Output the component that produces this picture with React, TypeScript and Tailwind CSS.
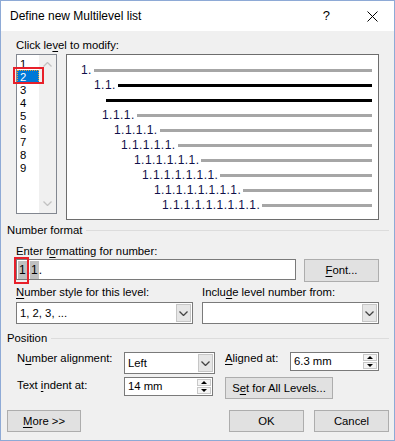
import React from "react";

const font = "font-['Liberation_Sans',Arial,sans-serif]";

function Chevron({ color = "#444" }: { color?: string }) {
  return (
    <svg width="9" height="5" viewBox="0 0 9 5">
      <polyline points="0.5,0.5 4.5,4.5 8.5,0.5" fill="none" stroke={color} strokeWidth="1.3" />
    </svg>
  );
}

function Select({ value, className = "" }: { value: string; className?: string }) {
  return (
    <div className={`flex h-[22px] border border-[#7a7a7a] bg-white ${className}`}>
      <div className="flex flex-1 items-center pl-[3px]">{value}</div>
      <div className="m-px flex w-[15px] items-center justify-center border border-[#c6c6c6] bg-[#e6e6e6]">
        <Chevron />
      </div>
    </div>
  );
}

function Spin({ value, className = "" }: { value: string; className?: string }) {
  return (
    <div className={`flex h-[19px] border border-[#7a7a7a] bg-white ${className}`}>
      <div className="flex flex-1 items-center pl-[3px]">{value}</div>
      <div className="flex w-[16px] flex-col gap-px p-px">
        <div className="flex flex-1 items-center justify-center border border-[#c8c8c8] bg-[#f4f4f4]">
          <div className="h-0 w-0 border-x-[3px] border-b-[3px] border-x-transparent border-b-black" />
        </div>
        <div className="flex flex-1 items-center justify-center border border-[#c8c8c8] bg-[#f4f4f4]">
          <div className="h-0 w-0 border-x-[3px] border-t-[3px] border-x-transparent border-t-black" />
        </div>
      </div>
    </div>
  );
}

function Button({ children, className = "" }: { children: React.ReactNode; className?: string }) {
  return (
    <div className={`flex h-[22px] items-center justify-center border border-[#adadad] bg-[#e1e1e1] ${className}`}>
      {children}
    </div>
  );
}

function Group({ title }: { title: string }) {
  return (
    <div className="flex h-[15px] items-center">
      <span className="leading-[15px]">{title}</span>
      <div className="ml-[4px] h-px flex-1 bg-[#dcdcdc]" />
    </div>
  );
}

const rows = [
  { indent: 14, text: "1.", black: false },
  { indent: 27, text: "1.1.", black: true },
  { indent: 39, text: "", black: true },
  { indent: 35, text: "1.1.1.", black: false },
  { indent: 47, text: "1.1.1.1.", black: false },
  { indent: 54, text: "1.1.1.1.1.", black: false },
  { indent: 67, text: "1.1.1.1.1.1.", black: false },
  { indent: 75, text: "1.1.1.1.1.1.1.", black: false },
  { indent: 87, text: "1.1.1.1.1.1.1.1.", black: false },
  { indent: 95, text: "1.1.1.1.1.1.1.1.1.", black: false },
];

function Preview() {
  return (
    <div className="ml-[9px] h-[166px] w-[313px] border border-[#6d6d6d] bg-white pr-[6px] pt-[8px]">
      {rows.map((r, i) => (
        <div key={i} className="flex h-[15px] items-center" style={{ paddingLeft: r.indent }}>
          {r.text && (
            <span className="mr-[2px] text-[12px] leading-[15px] tracking-[0.45px] text-[#10104a]">{r.text}</span>
          )}
          <div className={`h-[3px] flex-1 ${r.black ? "bg-black" : "bg-[#a6a6a6]"}`} />
        </div>
      ))}
    </div>
  );
}

function LevelList() {
  const levels = ["1", "2", "3", "4", "5", "6", "7", "8", "9"];
  return (
    <div className="relative flex h-[160px] w-[41px] border border-[#828790] bg-white">
      <div className="w-[22px] pt-[2px]">
        {levels.map((l) => (
          <div
            key={l}
            className={`h-[13px] pl-[2px] leading-[13px] ${
              l === "2" ? "border border-dotted border-[#f0a030] bg-[#0078d7] text-white" : "border border-transparent"
            }`}
          >
            {l}
          </div>
        ))}
      </div>
      <div className="flex flex-1 flex-col items-center justify-between bg-[#f0f0f0] py-[7px]">
        <div className="rotate-180">
          <Chevron color="#c2c2c2" />
        </div>
        <Chevron color="#c2c2c2" />
      </div>
      <div className="absolute left-[-4px] top-[12px] h-[17px] w-[31px] border-2 border-[#e8202a]" />
    </div>
  );
}

export default function App() {
  return (
    <div className={`flex h-[441px] w-[395px] flex-col overflow-hidden border border-[#8eaad6] bg-[#f0f0f0] text-[11.3px] text-black ${font}`}>
      <div className="flex h-[30px] items-center bg-white pl-[9px] pr-[16px] text-[12px]">
        <span>Define new Multilevel list</span>
        <span className="ml-auto text-[13px]">?</span>
        <svg className="ml-[37px]" width="11" height="11" viewBox="0 0 11 11">
          <path d="M0.5 0.5 L10.5 10.5 M10.5 0.5 L0.5 10.5" stroke="#000" strokeWidth="1" />
        </svg>
      </div>

      <div className="flex flex-1 flex-col pl-[6px] pr-[5px]">
        <div className="px-[9px]">
          <div className="mt-[7px] h-[15px] leading-[15px]">
            Click le<u className="underline-offset-2">v</u>el to modify:
          </div>
          <div className="mt-px flex">
            <LevelList />
            <Preview />
          </div>
        </div>

        <div className="mt-[3px]">
          <Group title="Number format" />
        </div>
        <div className="px-[9px]">
          <div className="mt-[6px] h-[15px] leading-[15px]">
            Enter f<u className="underline-offset-2">o</u>rmatting for number:
          </div>
          <div className="flex h-[23px] items-start">
            <div className="relative flex h-[21px] w-[280px] items-center border border-[#7a7a7a] bg-white pl-px text-[12px]">
              <span className="bg-[#c0c0c0] px-px">1</span>
              <span>.</span>
              <span className="bg-[#c0c0c0] px-px">1</span>
              <span>.</span>
              <div className="absolute left-[-3px] top-[-3px] h-[27px] w-[15px] border-2 border-[#e8202a]" />
            </div>
            <Button className="ml-[8px] h-[23px] w-[75px]">
              <span>
                <u className="underline-offset-2">F</u>ont...
              </span>
            </Button>
          </div>
          <div className="mt-[3px] flex h-[15px] leading-[15px]">
            <div className="w-[186px]">
              <u className="underline-offset-2">N</u>umber style for this level:
            </div>
            <div>
              Inclu<u className="underline-offset-2">d</u>e level number from:
            </div>
          </div>
          <div className="mt-[2px] flex gap-[9px]">
            <Select value="1, 2, 3, ..." className="w-[177px]" />
            <Select value="" className="w-[177px]" />
          </div>
        </div>

        <div className="mt-[7px]">
          <Group title="Position" />
        </div>
        <div className="px-[9px]">
          <div className="mt-[6px] flex h-[22px] items-start">
            <div className="mt-[-1px] w-[108px] pl-px leading-[15px]">
              N<u className="underline-offset-2">u</u>mber alignment:
            </div>
            <Select value="Left" className="w-[91px]" />
            <div className="ml-[10px] mt-[-1px] w-[65px] leading-[15px]">
              <u className="underline-offset-2">A</u>ligned at:
            </div>
            <Spin value="6.3 mm" className="w-[89px]" />
          </div>
          <div className="mt-[3px] flex h-[22px] items-start">
            <div className="w-[108px] pl-px pt-px leading-[15px]">
              Text <u className="underline-offset-2">i</u>ndent at:
            </div>
            <Spin value="14 mm" className="w-[89px]" />
            <Button className="ml-[12px] w-[108px]">
              <span>
                S<u className="underline-offset-2">e</u>t for All Levels...
              </span>
            </Button>
          </div>
        </div>

        <div className="mt-[11px] flex">
          <Button className="w-[74px]">
            <span>
              <u className="underline-offset-2">M</u>ore &gt;&gt;
            </span>
          </Button>
          <Button className="ml-auto w-[75px] border-[#0078d7]">OK</Button>
          <Button className="ml-[10px] w-[75px]">Cancel</Button>
        </div>
      </div>
    </div>
  );
}
